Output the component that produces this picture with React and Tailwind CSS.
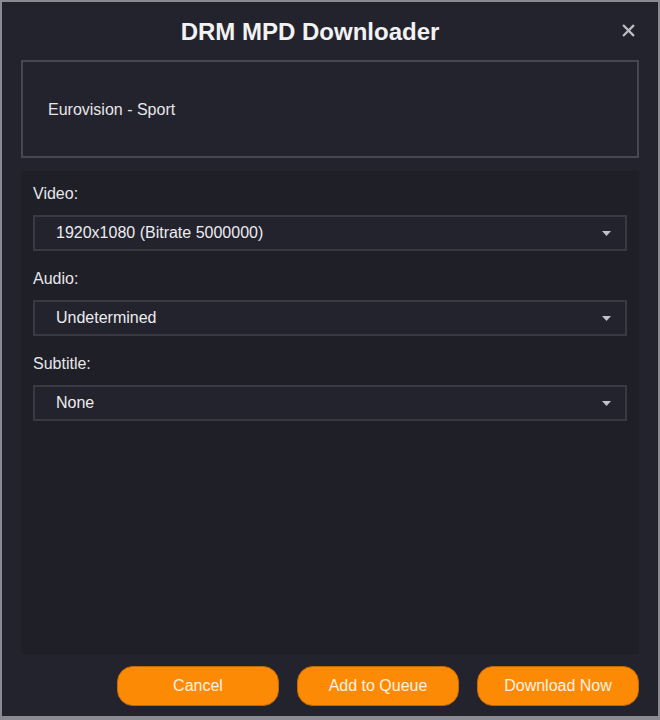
const selects = [
  { label: "Video:", value: "1920x1080 (Bitrate 5000000)" },
  { label: "Audio:", value: "Undetermined" },
  { label: "Subtitle:", value: "None" },
];

export default function App() {
  return (
    <div
      className="w-[660px] h-[720px] bg-[#8a8a92] pl-[2px] pt-[2px] pr-[2px] pb-[4px]"
      style={{ fontFamily: '"Liberation Sans", Arial, sans-serif' }}
    >
      <div className="h-full bg-[#23232d] flex flex-col px-[19px]">
        {/* Header */}
        <div className="relative h-[58px] flex items-center justify-center pr-[40px]">
          <h1 className="text-[24px] font-bold text-[#f2f2f2] pt-[2px]">DRM MPD Downloader</h1>
          <button className="absolute right-[4px] top-[22px] text-[#bdbdc4] leading-none">
            <svg width="13" height="13" viewBox="0 0 14 14">
              <path d="M2 2 L12 12 M12 2 L2 12" stroke="currentColor" strokeWidth="2.4" strokeLinecap="square" />
            </svg>
          </button>
        </div>

        {/* Info box */}
        <div className="h-[98px] border-2 border-[#474752] flex items-center px-[25px] pt-[2px]">
          <span className="text-[16px] text-[#e6e6ea]">Eurovision - Sport</span>
        </div>

        {/* Form panel */}
        <div className="mt-[13px] h-[483px] bg-[#1f1f28] px-[12px] pt-[12px]">
          {selects.map((s) => (
            <div key={s.label} className="mb-[17px]">
              <div className="text-[16px] text-[#e6e6ea] h-[22px] leading-[22px] mb-[10px]">{s.label}</div>
              <div className="h-[36px] border-2 border-[#393944] bg-[#23232d] flex items-center justify-between pl-[21px] pr-[14px]">
                <span className="text-[16px] text-[#ececf0]">{s.value}</span>
                <svg width="9" height="5" viewBox="0 0 9 5">
                  <path d="M0 0 L9 0 L4.5 5 Z" fill="#c0c0d0" />
                </svg>
              </div>
            </div>
          ))}
        </div>

        {/* Footer buttons */}
        <div className="flex justify-end gap-[18px] mt-[12px]">
          {["Cancel", "Add to Queue", "Download Now"].map((b) => (
            <button
              key={b}
              className="w-[162px] h-[40px] rounded-[16px] bg-[#fd8a04] border border-[#c26a05] text-[16px] text-[#fdf2e4]"
            >
              {b}
            </button>
          ))}
        </div>
      </div>
    </div>
  );
}
